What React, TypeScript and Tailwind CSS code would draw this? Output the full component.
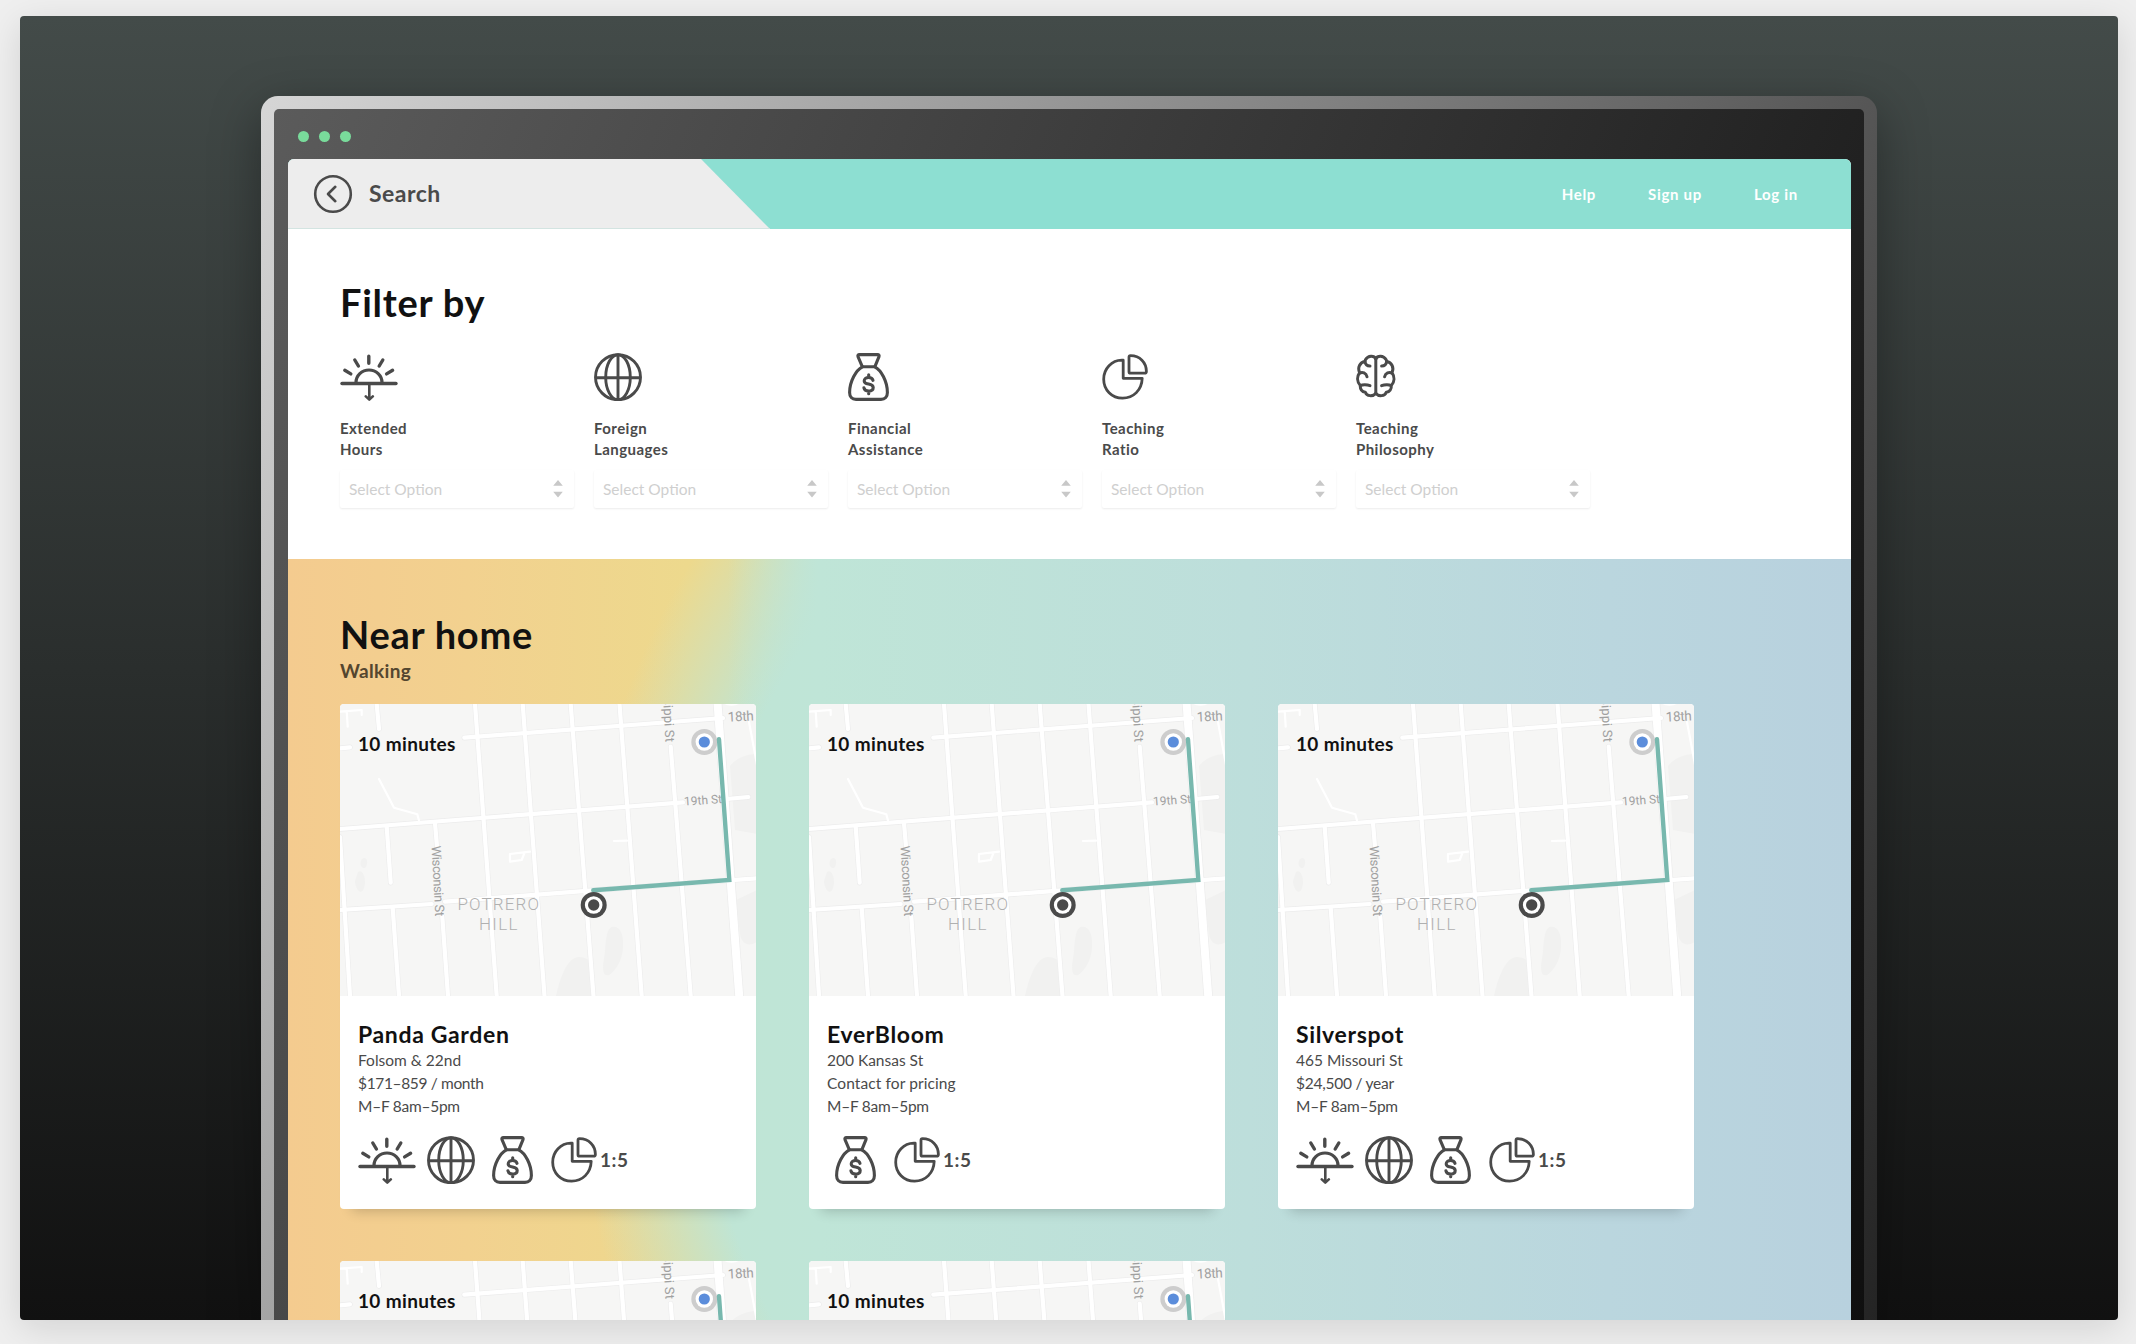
import React from "react";

type IconProps = { className?: string };

function ExtendedHoursIcon({ className = "" }: IconProps) {
  return (
    <svg width="58" height="48" viewBox="0 0 58 48" fill="none" stroke="#4a4a4a" strokeLinecap="round" className={`shrink-0 ${className}`}>
      <path d="M2 30.500H56" strokeWidth="3.400" />
      <path d="M16 29.500a13 12.500 0 0 1 26 0" strokeWidth="3.200" />
      <path d="M28.800 3.200v7M14.800 7l3.600 6M42.800 7l-3.600 6M4.800 17.300l6 3.600M52.600 17.300l-6 3.600" strokeWidth="3.400" />
      <path d="M29.300 31v15M25.800 43.400l3.500 3.200 3.500-3.200" strokeWidth="2.600" strokeLinejoin="round" />
    </svg>
  );
}

function GlobeIcon({ className = "" }: IconProps) {
  return (
    <svg width="48" height="48" viewBox="0 0 48 48" fill="none" stroke="#4a4a4a" strokeWidth="2.900" className={`shrink-0 ${className}`}>
      <circle cx="24" cy="24.200" r="22.500" />
      <ellipse cx="24" cy="24.200" rx="12.300" ry="22.500" />
      <path d="M24 1.700v45M1.500 24.700h45" />
    </svg>
  );
}

function MoneyBagIcon({ className = "" }: IconProps) {
  return (
    <svg width="41" height="48" viewBox="0 0 41 48" fill="none" stroke="#4a4a4a" strokeWidth="3.100" strokeLinejoin="round" strokeLinecap="round" className={`shrink-0 ${className}`}>
      <path d="M14.400 13.800L10 3.600Q9.400 1.600 11.400 1.600H29.600Q31.600 1.600 31 3.600L26.800 13.800Z" />
      <path d="M14.400 13.800C8 17 1.600 28.500 1.600 39.500C1.600 43.500 3.900 46.400 8 46.400H33C37.100 46.400 39.400 43.500 39.400 39.500C39.400 28.500 33.200 17 26.800 13.800" />
      <path d="M25 27.300C24.500 25.400 22.900 24.500 20.600 24.500C18 24.500 16.200 25.800 16.200 27.900C16.200 32.400 25.200 29.700 25.200 34.500C25.200 36.800 23.300 38.100 20.700 38.100C18 38.100 16.300 36.900 15.900 34.800M20.700 21.800v2.700M20.700 38.100v2.700" />
    </svg>
  );
}

function PieIcon({ className = "" }: IconProps) {
  return (
    <svg width="46" height="48" viewBox="0 0 46 48" fill="none" stroke="#4a4a4a" strokeWidth="2.800" strokeLinejoin="round" className={`shrink-0 ${className}`}>
      <path d="M21.200 7.200V25.300H40.200C39.800 37 31.500 45.200 20.600 45.200C9.800 45.200 1.700 36.800 1.700 26.200C1.700 15.500 9.800 7.300 19.800 7.200Z" />
      <path d="M27 4.200Q27 2.700 28.500 2.700C38 2.900 44.200 9.300 44.400 18.200Q44.400 20.200 42.600 20.200H28.500Q27 20.200 27 18.700Z" />
    </svg>
  );
}

function BrainHalf() {
  return (
    <>
      <path d="M19.800 5.800C18 2.400 12.200 2.300 9.400 6.800C9.100 7.400 9 8 9 8.600C3.800 9.400 1.300 14.500 3.600 19.600C.800 23.600 .900 28.700 4.300 32.400C3.900 36.200 6 39 9.300 39.300C10.700 43.400 16.800 43.700 19.800 40.400" />
      <path d="M9 8.600C9.300 11.500 11.200 13 14 13M3.600 20.200C6.400 18.600 10.200 20 11 23.800M4.800 32.400C6.400 31.400 11 31.400 14 32.600" />
    </>
  );
}

function BrainIcon({ className = "" }: IconProps) {
  return (
    <svg width="40" height="48" viewBox="0 0 40 48" fill="none" stroke="#4a4a4a" strokeWidth="3" strokeLinejoin="round" strokeLinecap="round" className={`shrink-0 ${className}`}>
      <path d="M19.800 5.400V40.600" />
      <BrainHalf />
      <g transform="matrix(-1 0 0 1 39.600 0)">
        <BrainHalf />
      </g>
    </svg>
  );
}

const filters = [
  { top: "Extended", bottom: "Hours", Icon: ExtendedHoursIcon },
  { top: "Foreign", bottom: "Languages", Icon: GlobeIcon },
  { top: "Financial", bottom: "Assistance", Icon: MoneyBagIcon },
  { top: "Teaching", bottom: "Ratio", Icon: PieIcon },
  { top: "Teaching", bottom: "Philosophy", Icon: BrainIcon },
];

type School = {
  name: string;
  address: string;
  price: string;
  priceClass: string;
  hours: string;
  extended: boolean;
};

const schools: School[] = [
  { name: "Panda Garden", address: "Folsom & 22nd", price: "$171–859 / month", priceClass: "tracking-[-0.350px]", hours: "M–F 8am–5pm", extended: true },
  { name: "EverBloom", address: "200 Kansas St", price: "Contact for pricing", priceClass: "tracking-[0.100px]", hours: "M–F 8am–5pm", extended: false },
  { name: "Silverspot", address: "465 Missouri St", price: "$24,500 / year", priceClass: "tracking-[-0.250px]", hours: "M–F 8am–5pm", extended: true },
];

function MapRoads() {
  return (
    <>
      <path d="M135 0L156.700 292M182.700 0L204.500 292M230.700 0L253.500 292M279.500 0L301.700 292M330.700 42.700L350.700 292M46.700 122.700L50.700 178.700M52.700 204L59 292M95 119L97 142.700M102.300 212.700L108 292M0 133L10 292M36.700 0L39 25" />
      <path d="M124.300 33.700L383 14M0 125L343 98.300M386.700 95L408.300 93M0 206L91.700 200M105 197.700L253 186.300L417 174.300M0 44.300L10 43.300" />
    </>
  );
}

function RouteMap() {
  return (
    <svg width="416" height="292" viewBox="0 0 416 292" fill="none" className="block rounded-t-[4px]">
      <rect width="417" height="292" fill="#f6f6f5" />
      <g fill="#f1f1f0">
        <path d="M270 224c6-4 13 2 13 14 1 14-5 27-14 33-6 2-7-6-5-16 2-12 1-25 6-31Z" />
        <path d="M216 292c6-26 14-40 24-39 8 1 11 4 11 10l2 29Z" />
        <path d="M22 155c4-3 7 2 4 8-3 3-8-2-4-8ZM18 168c5-4 9 8 6 16-3 9-9 0-9-7Z" />
        <path d="M390 62c6-8 17-12 27-12v80l-22-4Z" />
        <path d="M396 196l21-10v52c-10 6-16 0-17-8Z" />
      </g>
      <g stroke="#ececec" strokeWidth="5.400" strokeLinecap="round" strokeLinejoin="round">
        <MapRoads />
      </g>
      <path d="M377.300 -4L399.500 296" stroke="#ececec" strokeWidth="9.400" />
      <g stroke="#ffffff" strokeWidth="4.200" strokeLinecap="round" strokeLinejoin="round">
        <MapRoads />
      </g>
      <path d="M377.300 -4L399.500 296" stroke="#ffffff" strokeWidth="8" />
      <path d="M39 75L54 103.700L77.300 110.300L79.300 117.700M0 7.700L21.700 6V11M6.700 7L7.700 22.700M190 147.700L170 150V157.700L181.700 156L184.300 149.300M274 137L287 136.700M409 18L418 66" stroke="#ffffff" strokeWidth="2.200" strokeLinecap="round" strokeLinejoin="round" />
      <path d="M384 -2a9 5 0 0 0 15 0" stroke="#ffffff" strokeWidth="3" />
      <g fill="#a0a0a0" className="font-['Roboto'] text-[13.500px]">
        <text transform="translate(388 17.700) rotate(-3)" textLength="26">18th</text>
        <text transform="translate(344.300 101.600) rotate(-4)" className="text-[12px]" textLength="38">19th St</text>
        <text transform="translate(91.600 142) rotate(87)" className="text-[13px]" textLength="70.500">Wisconsin St</text>
        <text transform="translate(325.500 38.300) rotate(87)" textAnchor="end" className="text-[13px]" letterSpacing="0.150">Mississippi St</text>
      </g>
      <g fill="#b0b0b0" className="font-['Roboto'] text-[17px] font-light">
        <text x="117.500" y="206" textLength="81.500">POTRERO</text>
        <text x="139" y="226" textLength="38.500">HILL</text>
      </g>
      <circle cx="364.300" cy="38" r="13" fill="#cdcdcd" />
      <circle cx="364.300" cy="38" r="8.700" fill="#ffffff" />
      <circle cx="364.300" cy="38" r="5.600" fill="#5b8ddb" />
      <path d="M379 35.300L389.300 176L253.300 186.300" stroke="#78b8ae" strokeWidth="4.400" strokeLinecap="round" strokeLinejoin="miter" />
      <circle cx="253.700" cy="201" r="13" fill="#4a4a4a" />
      <circle cx="253.700" cy="201" r="8.800" fill="#ffffff" />
      <circle cx="253.700" cy="201" r="5.700" fill="#4a4a4a" />
    </svg>
  );
}

function SchoolCard({ school }: { school: School }) {
  return (
    <article className="h-[505px] w-[416px] rounded-[4px] bg-white shadow-[0_14px_12px_-12px_rgba(0,0,0,0.2)]">
      <div className="relative">
        <RouteMap />
        <span className="absolute top-[28px] left-[18px] text-[19px] leading-6 font-bold tracking-[0.350px] whitespace-nowrap text-[#111]">10 minutes</span>
      </div>
      <div className="px-[18px] pt-6">
        <h3 className="text-[23px] leading-7 font-bold tracking-[0.650px] text-[#111]">{school.name}</h3>
        <div className="pt-px text-[15.500px] leading-[23px] text-[#4a4a4a]">
          <p>{school.address}</p>
          <p className={school.priceClass}>{school.price}</p>
          <p className="tracking-[-0.250px]">{school.hours}</p>
        </div>
        <div className="mt-[18px] flex h-12 items-center gap-[9px]">
          {school.extended && <ExtendedHoursIcon />}
          {school.extended && <GlobeIcon className="ml-[2px]" />}
          <MoneyBagIcon className="ml-2" />
          <PieIcon className="ml-[9px]" />
          <span className="-ml-[6px] text-[19px] leading-6 font-bold tracking-[0.500px] text-[#4a4a4a]">1:5</span>
        </div>
      </div>
    </article>
  );
}

function SelectBox() {
  return (
    <div className="mt-[10px] flex h-[38px] w-[234px] items-center justify-between rounded-[2px] bg-white pt-px pr-[11px] pl-[9px] shadow-[0_1px_2px_rgba(0,0,0,0.08)]">
      <span className="text-[15.500px] text-[#cfcfcf]">Select Option</span>
      <svg width="10" height="18" viewBox="0 0 10 18" fill="#c8c8c8" className="-mt-px">
        <path d="M5 0L9.800 5.800H.200ZM5 17.600L.200 11.800H9.800Z" />
      </svg>
    </div>
  );
}

export default function App() {
  return (
    <div className="h-[1344px] w-[2136px] overflow-hidden bg-[#efefef] px-5 pt-4 font-['Lato','Liberation_Sans',sans-serif] text-[#4a4a4a]">
      <div className="h-[1304px] w-[2098px] rounded-[4px] shadow-[0_8px_36px_rgba(0,0,0,0.12)]">
        <div className="h-full w-full overflow-hidden rounded-[4px] bg-[linear-gradient(180deg,#434b49_0%,#111111_100%)] pt-20">
          <div className="ml-[241px] h-[1300px] w-[1616px] rounded-t-[17px] bg-[linear-gradient(117deg,#d6d6d6_0%,#212121_100%)] px-[13px] pt-[13px] shadow-[0_14px_50px_rgba(0,0,0,0.35)]">
            <div className="h-full rounded-t-[5px] bg-[linear-gradient(113deg,#5b5b5b_0%,#0e0e0e_100%)] px-[14px] pr-[13px]">
              <div className="flex h-[50px] items-center gap-[10px] pt-1 pl-[10px]">
                <span className="size-[11px] rounded-full bg-[#79db9b]" />
                <span className="size-[11px] rounded-full bg-[#79db9b]" />
                <span className="size-[11px] rounded-full bg-[#79db9b]" />
              </div>
              <div className="overflow-hidden rounded-t-[6px] bg-white">
                <header className="flex h-[70px] items-center justify-between bg-[#8ddfd2]">
                  <div className="flex h-full w-[482px] items-center border-b border-[#d3e4e1] bg-[#ededed] pl-[25px] [clip-path:polygon(0_0,413px_0,482px_100%,0_100%)]">
                    <svg width="40" height="40" viewBox="0 0 40 40" fill="none" stroke="#4a4a4a" strokeWidth="2.600" strokeLinecap="round" strokeLinejoin="round">
                      <circle cx="20" cy="20" r="17.800" />
                      <path d="M22.300 12.800L15 20l7.300 7.200" />
                    </svg>
                    <span className="ml-4 pb-0.5 text-[23px] leading-7 font-bold tracking-[0.500px]">Search</span>
                  </div>
                  <nav className="flex gap-[52px] pr-[53px] text-[15px] font-bold tracking-[0.700px] text-white">
                    <span>Help</span>
                    <span>Sign up</span>
                    <span>Log in</span>
                  </nav>
                </header>

                <section className="h-[330px] pt-[49px] pl-[52px]">
                  <h1 className="text-[38px] leading-[48px] font-bold tracking-[0.750px] text-[#111]">Filter by</h1>
                  <div className="mt-[27px] flex gap-5">
                    {filters.map(({ top, bottom, Icon }) => (
                      <div key={top + bottom}>
                        <div className="flex h-[49px] items-start">
                          <Icon />
                        </div>
                        <p className="mt-4 text-[15px] leading-[21px] font-bold tracking-[0.450px]">
                          {top}
                          <br />
                          {bottom}
                        </p>
                        <SelectBox />
                      </div>
                    ))}
                  </div>
                </section>

                <section className="h-[800px] bg-[linear-gradient(90deg,rgba(189,229,213,0)_440px,#bfe5d7_530px,#bddedb_960px,#bad6de_1320px,#b8d1de_1563px),radial-gradient(560px_720px_at_842px_449px,#bfe5d5_77%,rgba(191,229,213,0)_100%),linear-gradient(90deg,#f4cb8f_0px,#f2d18f_180px,#edd98d_400px)] pt-[51px] pl-[52px]">
                  <h2 className="text-[38px] leading-[48px] font-bold tracking-[0.750px] text-[#111]">Near home</h2>
                  <p className="text-[19px] leading-[26px] font-bold tracking-[0.300px] text-[#54462f]">Walking</p>
                  <div className="mt-[20px] grid w-[1355px] grid-cols-[416px_416px_416px] gap-x-[53px] gap-y-[52px]">
                    {schools.map((school) => (
                      <SchoolCard key={school.name} school={school} />
                    ))}
                    {schools.slice(0, 2).map((school) => (
                      <SchoolCard key={`${school.name}-next`} school={school} />
                    ))}
                  </div>
                </section>
              </div>
            </div>
          </div>
        </div>
      </div>
    </div>
  );
}
